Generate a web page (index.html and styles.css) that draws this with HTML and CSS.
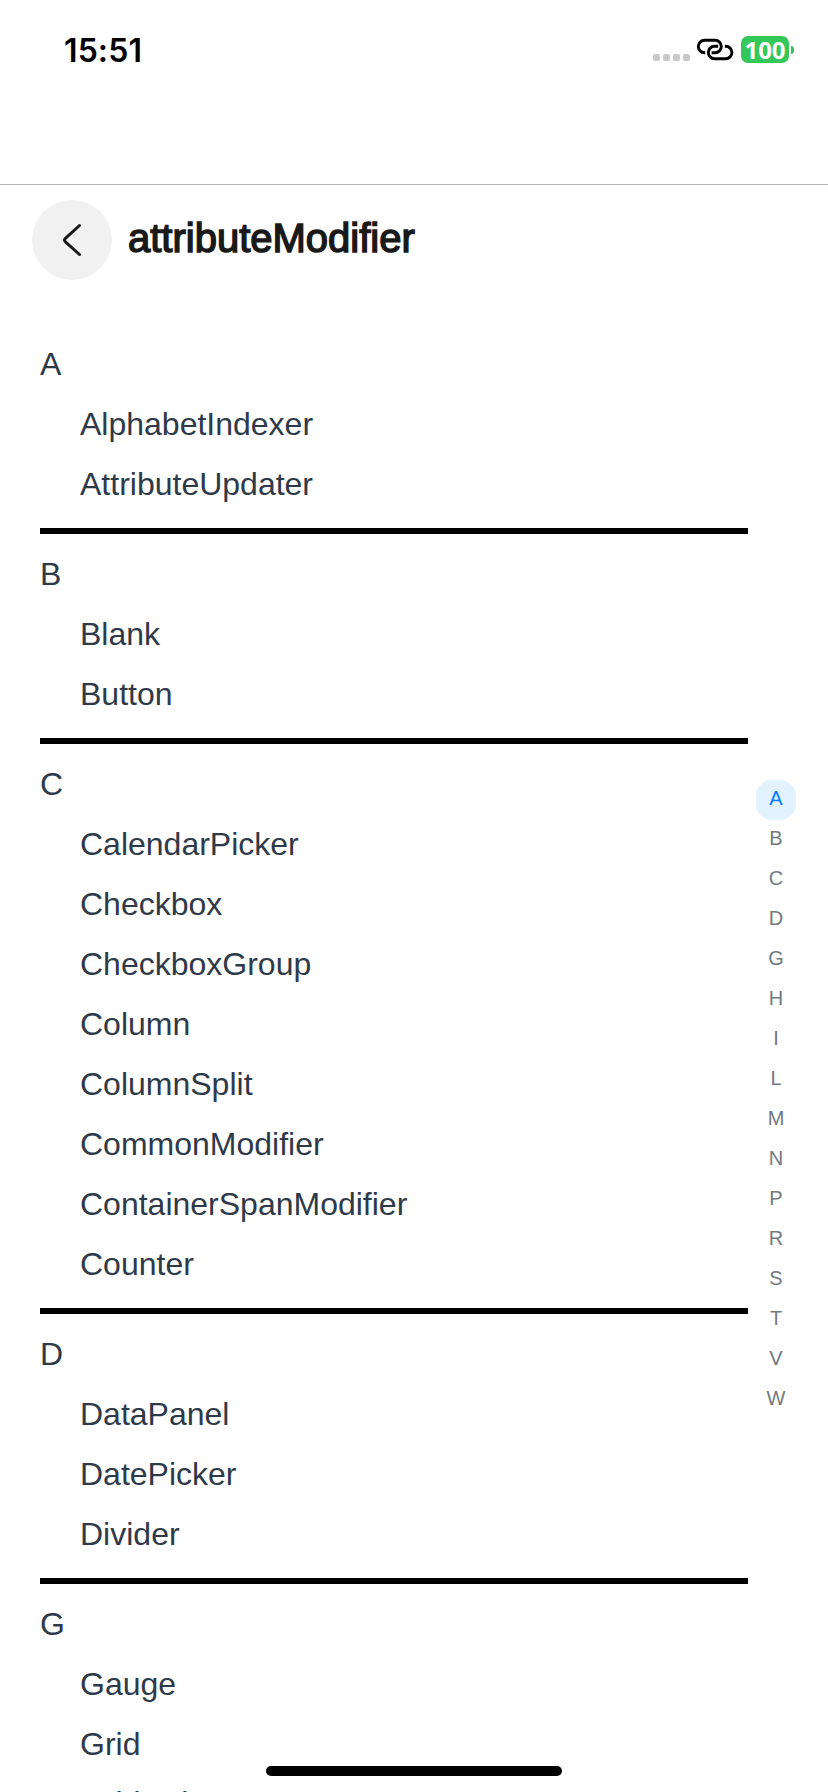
FILE: index.html
```html
<!DOCTYPE html>
<html lang="en">
<head>
<meta charset="utf-8">
<title>attributeModifier</title>
<link rel="stylesheet" href="styles.css">
</head>
<body>
<div class="screen">
  <div class="status">
    <span class="time">15:51</span>
    <div class="indicators">
      <div class="dots"><i></i><i></i><i></i><i></i></div>
      <svg class="link" width="38" height="24" viewBox="0 0 38 24" fill="none" stroke="#000" stroke-width="2.9" stroke-linecap="butt">
        <path d="M9.2 14.7H8.5A6.2 6.2 0 0 1 8.5 2.3H19.1A6.2 6.2 0 0 1 19.1 14.7H15.6"/>
        <path d="M28.8 8.3H29.7A6.2 6.2 0 0 1 29.7 20.7H18.5A6.2 6.2 0 0 1 18.5 8.3H22.2"/>
      </svg>
      <div class="battery"><span class="level">100</span><span class="tip"></span></div>
    </div>
  </div>
  <header class="header">
    <div class="back">
      <svg width="20" height="34" viewBox="0 0 20 34" fill="none" stroke="#191919" stroke-width="3" stroke-linecap="round" stroke-linejoin="round"><path d="M17.5 2.5L3.4 15.3Q1.6 17 3.4 18.8L17.5 31.5"/></svg>
    </div>
    <h1 class="title">attributeModifier</h1>
  </header>
  <main class="content">
    <div class="list">
      <section class="group"><h2>A</h2><p>AlphabetIndexer</p><p>AttributeUpdater</p></section>
      <section class="group"><h2>B</h2><p>Blank</p><p>Button</p></section>
      <section class="group"><h2>C</h2><p>CalendarPicker</p><p>Checkbox</p><p>CheckboxGroup</p><p>Column</p><p>ColumnSplit</p><p>CommonModifier</p><p>ContainerSpanModifier</p><p>Counter</p></section>
      <section class="group"><h2>D</h2><p>DataPanel</p><p>DatePicker</p><p>Divider</p></section>
      <section class="group"><h2>G</h2><p>Gauge</p><p>Grid</p><p class="peek">GridCol</p></section>
    </div>
    <nav class="index">
      <span class="active">A</span><span>B</span><span>C</span><span>D</span><span>G</span><span>H</span><span>I</span><span>L</span><span>M</span><span>N</span><span>P</span><span>R</span><span>S</span><span>T</span><span>V</span><span>W</span>
    </nav>
  </main>
  <div class="home-bar"></div>
</div>
</body>
</html>
```
FILE: styles.css
```css
* { box-sizing: border-box; }
body { margin: 0; background: #fff; font-family: "Liberation Sans", Arial, sans-serif; }
.screen { position: relative; width: 828px; height: 1792px; overflow: hidden; display: flex; flex-direction: column; }
.status { flex: none; height: 185px; padding: 30px 34px 0 64px; display: flex; justify-content: space-between; align-items: flex-start; border-bottom: 1px solid #b2b2b2; }
.time { font: 600 32px/41px Inter, sans-serif; letter-spacing: 0.1px; }
.indicators { display: flex; align-items: flex-start; padding-top: 6px; }
.dots { display: flex; gap: 3px; padding-top: 18px; margin-right: 6px; }
.dots i { width: 7px; height: 7px; border-radius: 2px; background: #c9c9c9; }
.link { margin-top: 2px; margin-right: 7px; }
.battery { display: flex; align-items: center; gap: 2px; }
.level { width: 48px; height: 27px; border-radius: 7px; background: #34c759; color: #fff; font: 700 24px/27px "Open Sans", sans-serif; text-align: center; }
.tip { width: 3px; height: 8px; border-radius: 0 3px 3px 0; background: #34c759; }
.header { flex: none; height: 149px; padding: 15px 32px 0; display: flex; gap: 16px; }
.back { width: 80px; height: 80px; border-radius: 50%; background: #f1f1f1; display: flex; align-items: center; justify-content: center; }
.title { margin: 0; font-size: 40px; font-weight: 400; line-height: 76px; color: #191919; -webkit-text-stroke: 1.5px #191919; }
.content { flex: none; display: flex; padding-left: 40px; }
.list { width: 708px; color: #2f3a49; }
.group { padding-bottom: 14px; border-bottom: 6px solid #000; margin-bottom: 10px; }
.group h2, .group p { margin: 0; font-size: 32px; font-weight: 400; line-height: 60px; }
.group p { padding-left: 40px; }
.group .peek { line-height: 59px; }
.index { width: 40px; margin: 446px 0 0 8px; display: flex; flex-direction: column; color: #727980; font-size: 20px; }
.index span { height: 40px; line-height: 36px; text-align: center; }
.index .active { color: #007dff; background: #e2f2ff; border-radius: 16px; }
.home-bar { position: absolute; left: 266px; bottom: 16px; width: 296px; height: 10px; border-radius: 5px; background: #000; }
```
